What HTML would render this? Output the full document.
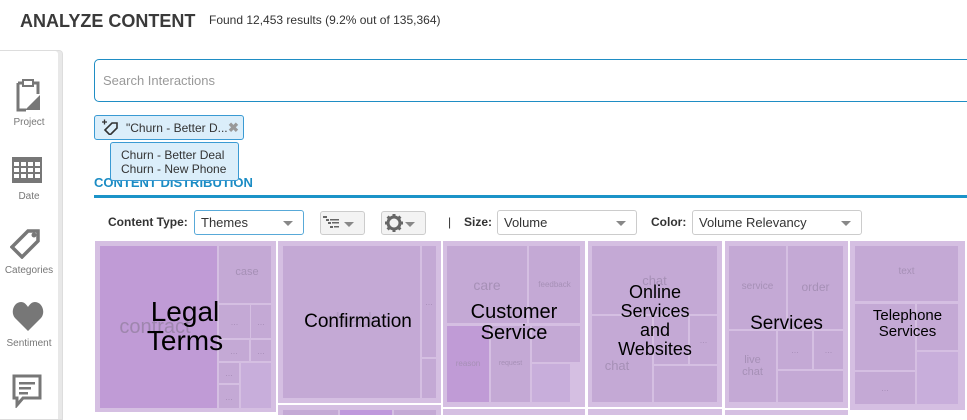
<!DOCTYPE html>
<html><head><meta charset="utf-8"><style>
*{margin:0;padding:0;box-sizing:border-box}
body{width:967px;height:415px;overflow:hidden;background:#fff;font-family:"Liberation Sans",Arial,sans-serif;position:relative}
.a{position:absolute}
.o{position:absolute;background:#d5bfe2}
.b{position:absolute;background:#c4a9d5;color:#a88fb9;text-align:center;font-size:9px;display:flex;align-items:center;justify-content:center}
.p{background:#c09bd6}
.big{position:absolute;color:#000;text-align:center;line-height:1.05}
.lbl{position:absolute;color:#a690b6;text-align:center}
.dd{position:absolute;height:25px;border:1px solid #ccc;border-radius:3px;background:#fff;font-size:13px;color:#333;padding:4px 6px}
.dd:after{content:"";position:absolute;right:10px;top:10px;border:5px solid transparent;border-top:5px solid #888;border-bottom:0}
.side{position:absolute;left:0;width:58px;text-align:center;font-size:10px;color:#777}
</style></head><body>
<div class="a" style="left:20px;top:11px;font-size:18px;font-weight:bold;color:#3a3a3a">ANALYZE CONTENT</div>
<div class="a" style="left:209px;top:13px;font-size:12px;color:#333">Found 12,453 results (9.2% out of 135,364)</div>
<!-- sidebar -->
<div class="a" style="left:0;top:50px;width:63px;height:370px;border:1px solid #ddd;border-left:0;border-radius:0 4px 0 0;background:#fff;box-shadow:inset -4px 0 0 #e8e8e8"></div>
<svg class="a" style="left:14px;top:78px" width="28" height="34" viewBox="0 0 28 34"><path d="M4 5h4M20 5h4V16M4 5v27h8" fill="none" stroke="#777" stroke-width="3"/><rect x="9" y="2" width="10" height="6" fill="none" stroke="#777" stroke-width="2"/><path d="M26 17v15H11z" fill="#777"/></svg>
<div class="side" style="top:117px">Project</div>
<svg class="a" style="left:12px;top:153px" width="30" height="30"><rect x="0" y="4" width="30" height="26" fill="#777"/><g fill="#fff"><rect x="2" y="9" width="5" height="4"/><rect x="9" y="9" width="5" height="4"/><rect x="16" y="9" width="5" height="4"/><rect x="23" y="9" width="5" height="4"/><rect x="2" y="15" width="5" height="4"/><rect x="9" y="15" width="5" height="4"/><rect x="16" y="15" width="5" height="4"/><rect x="23" y="15" width="5" height="4"/><rect x="2" y="21" width="5" height="4"/><rect x="9" y="21" width="5" height="4"/><rect x="16" y="21" width="5" height="4"/><rect x="23" y="21" width="5" height="4"/></g></svg>
<div class="side" style="top:191px">Date</div>
<svg class="a" style="left:10px;top:225px" width="34" height="34" viewBox="0 0 34 34"><path d="M2 22L18 6h10v10L12 32z" fill="none" stroke="#777" stroke-width="3.5"/><circle cx="24" cy="10" r="2.5" fill="#777"/></svg>
<div class="side" style="top:265px">Categories</div>
<svg class="a" style="left:12px;top:301px" width="32" height="30" viewBox="0 0 32 30"><path d="M16 30L3 17C-2 11 2 1 9 1c3 0 5 2 7 5c2-3 4-5 7-5c7 0 11 10 6 16z" fill="#777"/></svg>
<div class="side" style="top:338px">Sentiment</div>
<svg class="a" style="left:11px;top:374px" width="32" height="34" viewBox="0 0 32 34"><path d="M3 2h26v22H12l-6 7v-7H3z" fill="none" stroke="#777" stroke-width="3"/><g fill="#777"><rect x="8" y="8" width="16" height="2.5"/><rect x="8" y="13" width="12" height="2.5"/><rect x="8" y="18" width="9" height="2.5"/></g></svg>
<!-- search -->
<div class="a" style="left:94px;top:59px;width:890px;height:43px;border:1px solid #1f8dc4;border-radius:5px;font-size:13px;color:#999;padding:13px 8px">Search Interactions</div>
<div class="a" style="left:94px;top:115px;width:150px;height:25px;background:#dbeefa;border:1px solid #3a9ad3;border-radius:3px;font-size:12px;color:#333;padding:5px 0 0 31px">"Churn - Better D...</div>
<svg class="a" style="left:102px;top:119px" width="18" height="16" viewBox="0 0 18 16"><path d="M3 11L10 4h5v5L8 16z" fill="none" stroke="#333" stroke-width="1.6"/><path d="M0 3h5M2.5 0.5v5" stroke="#333" stroke-width="1.3"/></svg>
<div class="a" style="left:228px;top:120px;font-size:13px;color:#999;font-weight:bold">✖</div>
<div class="a" style="left:110px;top:142px;width:129px;height:39px;background:#dbeefa;border:1px solid #3a9ad3;border-radius:3px;font-size:12px;color:#333;padding:5px 0 0 10px;line-height:14px;z-index:2">Churn - Better Deal<br>Churn - New Phone</div>
<div class="a" style="left:94px;top:175px;font-size:13px;font-weight:bold;color:#1b8cc4">CONTENT DISTRIBUTION</div>
<div class="a" style="left:94px;top:195px;width:873px;height:3px;background:#1b93c8"></div>
<!-- controls -->
<div class="a" style="left:108px;top:215px;font-size:12px;font-weight:bold;color:#333">Content Type:</div>
<div class="dd" style="left:194px;top:210px;width:110px;border-color:#58a9d8">Themes</div>
<div class="dd" style="left:320px;top:211px;width:45px;height:24px;background:#f3f3f3"></div>
<svg class="a" style="left:323px;top:216px" width="18" height="14"><g fill="#666"><rect x="0" y="0" width="4" height="2"/><rect x="3" y="3" width="3" height="2"/><rect x="7" y="3" width="9" height="1.5"/><rect x="5" y="6" width="3" height="2"/><rect x="9" y="6" width="7" height="1.5"/><rect x="7" y="10" width="3" height="2"/><rect x="11" y="10" width="5" height="1.5"/></g></svg>
<div class="dd" style="left:381px;top:211px;width:45px;height:24px;background:#f3f3f3"></div>
<svg class="a" style="left:385px;top:214px" width="18" height="18" viewBox="0 0 18 18"><circle cx="9" cy="9" r="6" fill="none" stroke="#666" stroke-width="3"/><g stroke="#666" stroke-width="3"><path d="M9 0v4M9 14v4M0 9h4M14 9h4M2.6 2.6l2.8 2.8M12.6 12.6l2.8 2.8M2.6 15.4l2.8-2.8M12.6 5.4l2.8-2.8"/></g></svg>
<div class="a" style="left:448px;top:215px;font-size:12px;color:#333">|</div>
<div class="a" style="left:464px;top:215px;font-size:12px;font-weight:bold;color:#333">Size:</div>
<div class="dd" style="left:497px;top:210px;width:140px">Volume</div>
<div class="a" style="left:651px;top:215px;font-size:12px;font-weight:bold;color:#333">Color:</div>
<div class="dd" style="left:692px;top:210px;width:170px">Volume Relevancy</div>
<!-- treemap -->
<div class="o" style="left:95px;top:241px;width:181px;height:171px"></div>
<div class="b p" style="left:100px;top:246px;width:117px;height:162px"></div>
<div class="b" style="left:219px;top:246px;width:52px;height:57px"></div>
<div class="b" style="left:219px;top:305px;width:31px;height:33px">...</div>
<div class="b" style="left:251px;top:305px;width:20px;height:33px">...</div>
<div class="b" style="left:219px;top:340px;width:30px;height:21px">...</div>
<div class="b" style="left:251px;top:340px;width:20px;height:21px">...</div>
<div class="b" style="left:219px;top:363px;width:20px;height:20px">...</div>
<div class="b" style="left:219px;top:385px;width:20px;height:23px">...</div>
<div class="b" style="left:241px;top:363px;width:30px;height:45px;background:#c8aedb"></div>
<div class="lbl" style="left:225px;top:266px;width:44px;font-size:11px">case</div>
<div class="lbl" style="left:100px;top:316px;width:110px;font-size:20px;color:#9e86ad">contract</div>
<div class="big" style="left:110px;top:297px;width:150px;font-size:28px">Legal<br>Terms</div>

<div class="o" style="left:278px;top:241px;width:163px;height:162px"></div>
<div class="b" style="left:283px;top:246px;width:137px;height:152px"></div>
<div class="b" style="left:422px;top:246px;width:14px;height:111px">...</div>
<div class="b" style="left:422px;top:359px;width:14px;height:39px"></div>
<div class="lbl" style="left:283px;top:310px;width:137px;font-size:20px;color:#b39cc3">check</div>
<div class="big" style="left:283px;top:312px;width:150px;font-size:19px">Confirmation</div>
<div class="o" style="left:278px;top:405px;width:163px;height:10px"></div>
<div class="b" style="left:283px;top:410px;width:55px;height:5px"></div>
<div class="b" style="left:340px;top:410px;width:52px;height:5px;background:#bf98dc"></div>
<div class="b" style="left:394px;top:410px;width:42px;height:5px"></div>

<div class="o" style="left:443px;top:241px;width:142px;height:166px"></div>
<div class="b" style="left:447px;top:246px;width:80px;height:77px"></div>
<div class="b" style="left:529px;top:246px;width:51px;height:77px"></div>
<div class="b p" style="left:447px;top:326px;width:42px;height:76px"></div>
<div class="b" style="left:491px;top:326px;width:39px;height:76px"></div>
<div class="b" style="left:532px;top:326px;width:48px;height:36px"></div>
<div class="b" style="left:532px;top:364px;width:38px;height:38px;background:#c8aedb"></div>
<div class="lbl" style="left:447px;top:277px;width:80px;font-size:14px">care</div>
<div class="lbl" style="left:529px;top:280px;width:51px;font-size:8px">feedback</div>
<div class="lbl" style="left:447px;top:359px;width:42px;font-size:8px">reason</div>
<div class="lbl" style="left:491px;top:360px;width:39px;font-size:7px">request</div>
<div class="big" style="left:443px;top:302px;width:142px;font-size:20px">Customer<br>Service</div>
<div class="o" style="left:443px;top:409px;width:142px;height:6px"></div>

<div class="o" style="left:588px;top:241px;width:134px;height:166px"></div>
<div class="b" style="left:592px;top:246px;width:125px;height:68px"></div>
<div class="b" style="left:592px;top:316px;width:60px;height:86px"></div>
<div class="b" style="left:654px;top:316px;width:34px;height:48px"></div>
<div class="b" style="left:690px;top:316px;width:27px;height:48px">...</div>
<div class="b" style="left:654px;top:366px;width:63px;height:36px"></div>
<div class="lbl" style="left:592px;top:273px;width:125px;font-size:13px">chat</div>
<div class="lbl" style="left:592px;top:358px;width:50px;font-size:13px">chat</div>
<div class="big" style="left:588px;top:283px;width:134px;font-size:18px">Online<br>Services<br>and<br>Websites</div>
<div class="o" style="left:588px;top:409px;width:134px;height:6px"></div>

<div class="o" style="left:725px;top:241px;width:123px;height:167px"></div>
<div class="b" style="left:729px;top:246px;width:57px;height:83px"></div>
<div class="b" style="left:788px;top:246px;width:55px;height:83px"></div>
<div class="b" style="left:729px;top:331px;width:47px;height:71px"></div>
<div class="b" style="left:778px;top:331px;width:34px;height:38px">...</div>
<div class="b" style="left:814px;top:331px;width:29px;height:38px">...</div>
<div class="b" style="left:778px;top:371px;width:65px;height:31px"></div>
<div class="lbl" style="left:729px;top:281px;width:57px;font-size:10px">service</div>
<div class="lbl" style="left:788px;top:280px;width:55px;font-size:12px">order</div>
<div class="lbl" style="left:729px;top:354px;width:47px;font-size:11px;line-height:12px">live<br>chat</div>
<div class="big" style="left:725px;top:314px;width:123px;font-size:19px">Services</div>
<div class="o" style="left:725px;top:410px;width:123px;height:5px"></div>

<div class="o" style="left:850px;top:241px;width:115px;height:169px"></div>
<div class="b" style="left:855px;top:246px;width:103px;height:55px"></div>
<div class="b" style="left:855px;top:304px;width:60px;height:66px"></div>
<div class="b" style="left:917px;top:304px;width:41px;height:46px"></div>
<div class="b" style="left:855px;top:372px;width:60px;height:32px">...</div>
<div class="b" style="left:917px;top:352px;width:41px;height:52px;background:#c8aedb"></div>
<div class="lbl" style="left:855px;top:266px;width:103px;font-size:10px">text</div>
<div class="big" style="left:850px;top:308px;width:115px;font-size:15px">Telephone<br>Services</div>
<div class="o" style="left:967px;top:241px;width:5px;height:170px"></div>
</body></html>
